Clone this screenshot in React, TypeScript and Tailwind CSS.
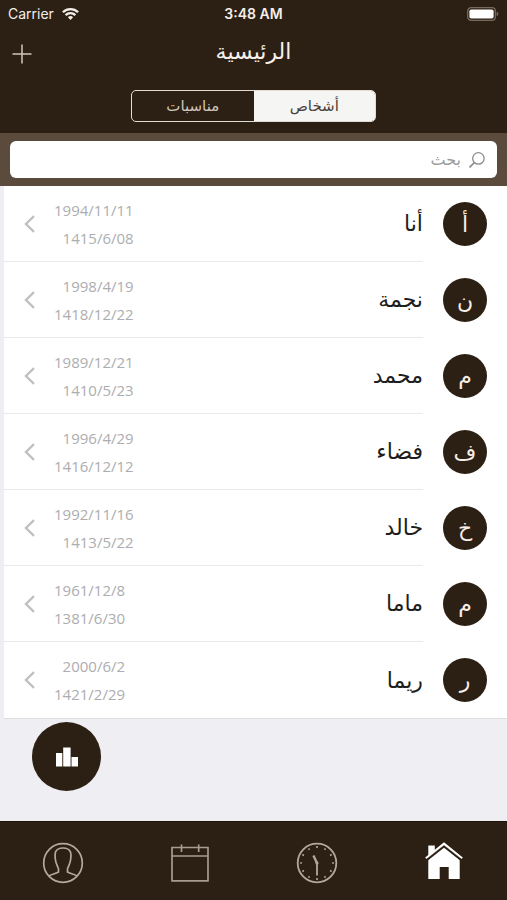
import { useState } from 'react';

interface Person {
  name: string;
  initial: string;
  gregorian: string;
  hijri: string;
}

const people: Person[] = [
  { name: 'أنا', initial: 'أ', gregorian: '1994/11/11', hijri: '1415/6/08' },
  { name: 'نجمة', initial: 'ن', gregorian: '1998/4/19', hijri: '1418/12/22' },
  { name: 'محمد', initial: 'م', gregorian: '1989/12/21', hijri: '1410/5/23' },
  { name: 'فضاء', initial: 'ف', gregorian: '1996/4/29', hijri: '1416/12/12' },
  { name: 'خالد', initial: 'خ', gregorian: '1992/11/16', hijri: '1413/5/22' },
  { name: 'ماما', initial: 'م', gregorian: '1961/12/8', hijri: '1381/6/30' },
  { name: 'ريما', initial: 'ر', gregorian: '2000/6/2', hijri: '1421/2/29' },
];

function StatusBar() {
  return (
    <div dir="ltr" className="grid h-7 grid-cols-3 items-center px-2 font-['Inter',sans-serif] text-sm text-[#f3eeea]">
      <div className="flex items-center gap-2">
        <span>Carrier</span>
        <svg className="h-3 w-[17px]" viewBox="0 0 17 12" fill="none" stroke="currentColor" strokeWidth="2.3">
          <path d="M0.9 4.3a10.8 10.8 0 0 1 15.2 0" />
          <path d="M3.6 7.1a7 7 0 0 1 9.8 0" />
          <path d="M8.5 12 5.9 9.2a3.7 3.7 0 0 1 5.2 0Z" fill="currentColor" stroke="none" />
        </svg>
      </div>
      <span className="text-center font-semibold">3:48 AM</span>
      <svg className="h-[14px] w-8 justify-self-end" viewBox="0 0 32 14">
        <rect x="0.7" y="0.7" width="27.6" height="12.6" rx="3.4" fill="none" stroke="#766b61" strokeWidth="1.3" />
        <rect x="2.4" y="2.4" width="24.2" height="9.2" rx="1.8" fill="#fff" />
        <path d="M29.6 4.6q1.8 1 1.8 2.4t-1.8 2.4Z" fill="#766b61" />
      </svg>
    </div>
  );
}

function PersonRow({ person, last }: { person: Person; last: boolean }) {
  return (
    <li className={last ? 'border-b border-[#dedee0]' : ''}>
      <a href="#person" className="flex h-[76px] items-stretch pr-5">
        <span className="ml-5 flex size-11 shrink-0 items-center justify-center self-center rounded-full bg-[#2c1f13] text-[22px] text-[#f5eee6]">
          {person.initial}
        </span>
        <span className={`flex flex-1 items-center justify-between ${last ? '' : 'border-b border-[#e9e9eb]'}`}>
          <span className="text-[22px] text-[#1d1d20]">{person.name}</span>
          <span className="flex items-center gap-[18px] pl-5">
            <span dir="ltr" className="flex flex-col text-right font-['Open_Sans',sans-serif] text-[15px] leading-7 text-[#adadb0]">
              <span>{person.gregorian}</span>
              <span>{person.hijri}</span>
            </span>
            <svg className="h-[18px] w-3" viewBox="0 0 12 18" fill="none" stroke="#c0c0c2" strokeWidth="2.4">
              <path d="M10 1.2 2 9l8 7.8" />
            </svg>
          </span>
        </span>
      </a>
    </li>
  );
}

function HomeIcon() {
  return (
    <svg className="size-11" viewBox="0 0 44 44">
      <path d="M6.3 4.5h6.5v5.500L6.300 15.500Z" fill="#fff" />
      <path d="M6.300 16.500 22 3.800l15.700 12.700V38H26.700V26H17.700v12H6.300Z" fill="#fff" />
      <path d="M3.800 17.200 22 2.600l18.200 14.600" fill="none" stroke="#fff" strokeWidth="2" />
      <path d="M4.600 19.200 22 5.400l17.400 13.800" fill="none" stroke="#2c1f13" strokeWidth="1.900" />
    </svg>
  );
}

function ClockIcon() {
  return (
    <svg className="size-11" viewBox="0 0 44 44" fill="none" stroke="#b5a99c">
      <circle cx="22" cy="22" r="19.3" strokeWidth="1.8" />
      <circle cx="22" cy="22" r="16" strokeWidth="1.8" pathLength="120" strokeDasharray="2 8" strokeDashoffset="1" />
      <path d="M18.4 14.6 22 22" strokeWidth="2.3" />
      <path d="M22 22v12.5" strokeWidth="1.8" />
      <circle cx="22" cy="22" r="1.6" fill="#b5a99c" stroke="none" />
    </svg>
  );
}

function CalendarIcon() {
  return (
    <svg className="size-11" viewBox="0 0 44 44" fill="none" stroke="#a99c8f" strokeWidth="1.7">
      <path d="M4 6.5h36v33.3H4ZM4 15h36M13.5 3.5V11M30.7 3.5V11" />
    </svg>
  );
}

function ProfileIcon() {
  return (
    <svg className="size-11" viewBox="0 0 44 44" fill="none" stroke="#b5a99c" strokeWidth="1.7">
      <circle cx="22" cy="22" r="19.3" />
      <path d="M8 35C11 33 15 32.600 17.500 31V28C16.500 25 14.500 22 14.300 18C13.800 15.500 13.900 13 14.500 11C15.700 8.200 18.500 7 22 7S28.300 8.200 29.500 11C30.100 13 30.200 15.500 29.700 18C29.500 22 27.500 25 26.500 28V31C29 32.600 33 33 36 35" />
    </svg>
  );
}

const navItems = [
  { label: 'الرئيسية', Icon: HomeIcon },
  { label: 'الوقت', Icon: ClockIcon },
  { label: 'التقويم', Icon: CalendarIcon },
  { label: 'الحساب', Icon: ProfileIcon },
];

export default function App() {
  const [tab, setTab] = useState<'people' | 'events'>('people');
  const [query, setQuery] = useState('');

  const visible = people.filter((p) => p.name.includes(query.trim()));

  return (
    <div dir="rtl" className="flex min-h-screen flex-col bg-[#eeeef3] font-['DejaVu_Sans',sans-serif]">
      <header className="bg-[#2c1f13] pb-[11px]">
        <StatusBar />
        <div className="grid h-[62px] grid-cols-[48px_1fr_48px] items-start pt-1">
          <span />
          <h1 className="text-center text-[22px] leading-10 text-[#f6f0eb]">الرئيسية</h1>
          <button type="button" aria-label="إضافة" className="mt-3 mr-auto ml-3 cursor-pointer">
            <svg className="size-5" viewBox="0 0 20 20" stroke="#cfc6bd" strokeWidth="1.5">
              <path d="M10 0.5v19M0.5 10h19" />
            </svg>
          </button>
        </div>
        <div className="mx-auto grid h-8 w-[245px] grid-cols-2 overflow-hidden rounded-[5px] border border-[#e3dcd5] text-[15px]">
          <button
            type="button"
            onClick={() => setTab('people')}
            className={tab === 'people' ? 'bg-[#f5f5f4] text-[#4b4038]' : 'text-[#cfc6bd]'}
          >
            أشخاص
          </button>
          <button
            type="button"
            onClick={() => setTab('events')}
            className={tab === 'events' ? 'bg-[#f5f5f4] text-[#4b4038]' : 'text-[#cfc6bd]'}
          >
            مناسبات
          </button>
        </div>
      </header>

      <div className="bg-[#5a4b3d] px-[10px] py-2">
        <label className="flex h-[37px] items-center gap-2 rounded-md bg-white px-3">
          <svg className="size-4" viewBox="0 0 16 16" fill="none" stroke="#8b8b8b" strokeWidth="1.3">
            <circle cx="9.4" cy="6.4" r="5.7" />
            <path d="M5.4 10.5 0.5 15.5" strokeWidth="1.7" />
          </svg>
          <input
            type="text"
            aria-label="بحث"
            placeholder="بحث"
            value={query}
            onChange={(e) => setQuery(e.target.value)}
            className="min-w-0 flex-1 bg-transparent text-base text-[#1d1d20] outline-none placeholder:text-[#9b9b9b]"
          />
        </label>
      </div>

      <main className="flex-1 pb-6">
        <ul className="ml-1 bg-white">
          {visible.map((person, i) => (
            <PersonRow key={person.name} person={person} last={i === visible.length - 1} />
          ))}
        </ul>
        <button
          type="button"
          aria-label="إحصائيات"
          className="mt-[3px] mr-auto ml-8 flex size-[69px] cursor-pointer items-center justify-center rounded-full bg-[#2c1f13]"
        >
          <svg className="h-5 w-6" viewBox="0 0 24 20" fill="#fff">
            <path d="M1 6h6.3v13.5H1ZM8.2 0.5h7.4v19H8.2ZM16.5 10H23v9.5h-6.500Z" />
          </svg>
        </button>
      </main>

      <nav className="grid h-[79px] grid-cols-4 border-t border-[#1b130b] bg-[#2c1f13] pt-1">
        {navItems.map(({ label, Icon }) => (
          <a key={label} href="#tab" aria-label={label} className="flex items-center justify-center">
            <Icon />
          </a>
        ))}
      </nav>
    </div>
  );
}
